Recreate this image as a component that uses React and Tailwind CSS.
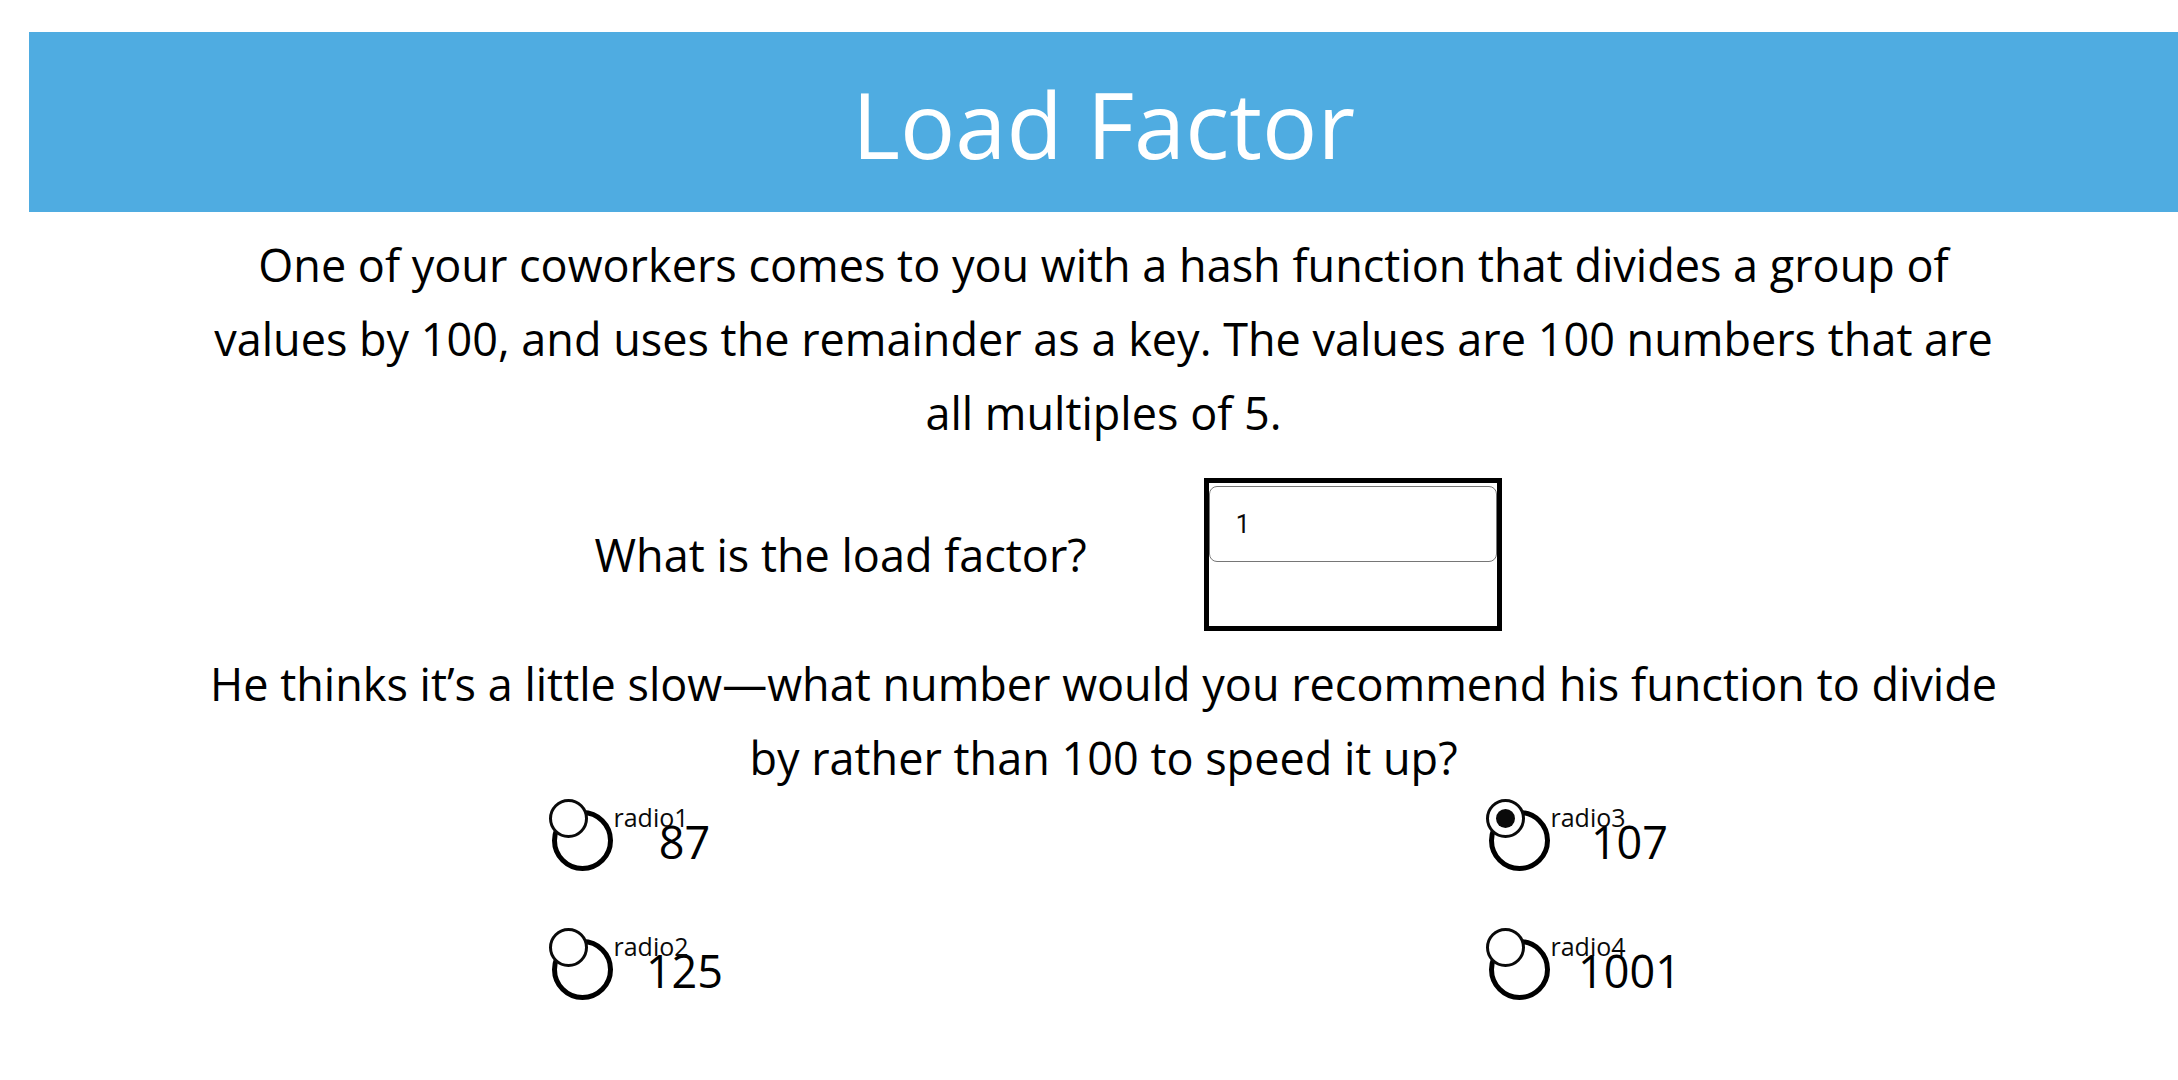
import { useState } from "react";

const OPTIONS = [
  { id: "radio1", value: "87", width: "w-24" },
  { id: "radio3", value: "107", width: "w-28" },
  { id: "radio2", value: "125", width: "w-24" },
  { id: "radio4", value: "1001", width: "w-28" },
];

function Option({ id, value, width, checked, onSelect }) {
  return (
    <div className="relative flex items-start pt-[11px] pl-[3px]">
      <span aria-hidden="true" className="size-[61px] shrink-0 rounded-full border-5 border-black" />
      <span className={`ml-6 text-center text-[45px] leading-[64px] ${width}`}>{value}</span>
      <div className="absolute top-0 left-0 flex items-start gap-[26px]">
        <input
          type="radio"
          id={id}
          name="divisor"
          value={value}
          checked={checked}
          onChange={() => onSelect(id)}
          className="grid size-[39px] appearance-none place-content-center rounded-full border-[3px] border-[#0a0a0a] bg-white before:size-[19px] before:rounded-full checked:before:bg-[#0a0a0a]"
        />
        <label htmlFor={id} className="text-[25px] leading-9 text-[#0a0a0a]">
          {id}
        </label>
      </div>
    </div>
  );
}

export default function App() {
  const [answer, setAnswer] = useState("1");
  const [selected, setSelected] = useState("radio3");

  return (
    <main className="min-h-screen bg-white pt-8 pl-[29px] font-['Open_Sans',sans-serif] text-black">
      <header className="bg-[#4face1] pt-7 pb-6 text-center text-white">
        <h1 className="text-[92px] leading-[128px]">Load Factor</h1>
      </header>

      <p className="mx-auto mt-4 max-w-[1800px] text-center text-[45px] leading-[74px]">
        One of your coworkers comes to you with a hash function that divides a group of values by 100, and uses the
        remainder as a key. The values are 100 numbers that are all multiples of 5.
      </p>

      <div className="mx-auto mt-7 flex max-w-[1164px] items-center gap-[117px] pl-[73px]">
        <label htmlFor="load-factor" className="text-[45px] leading-[74px]">
          What is the load factor?
        </label>
        <div className="h-[153px] w-[298px] border-5 border-black pt-[3px]">
          <input
            id="load-factor"
            type="text"
            value={answer}
            onChange={(e) => setAnswer(e.target.value)}
            className="h-[76px] w-full rounded-[8px] border border-[#767676] bg-white px-[26px] font-[Roboto,sans-serif] text-[25px] text-[#0a0a0a]"
          />
        </div>
      </div>

      <p className="mx-auto mt-4 max-w-[1800px] text-center text-[45px] leading-[74px]">
        He thinks it’s a little slow—what number would you recommend his function to divide by rather than 100 to speed
        it up?
      </p>

      <div
        role="radiogroup"
        aria-label="Recommended divisor"
        className="mx-auto mt-1 grid max-w-[1164px] grid-cols-[auto_auto] justify-between gap-y-[54px] pl-[27px]"
      >
        {OPTIONS.map((o) => (
          <Option key={o.id} {...o} checked={selected === o.id} onSelect={setSelected} />
        ))}
      </div>
    </main>
  );
}
